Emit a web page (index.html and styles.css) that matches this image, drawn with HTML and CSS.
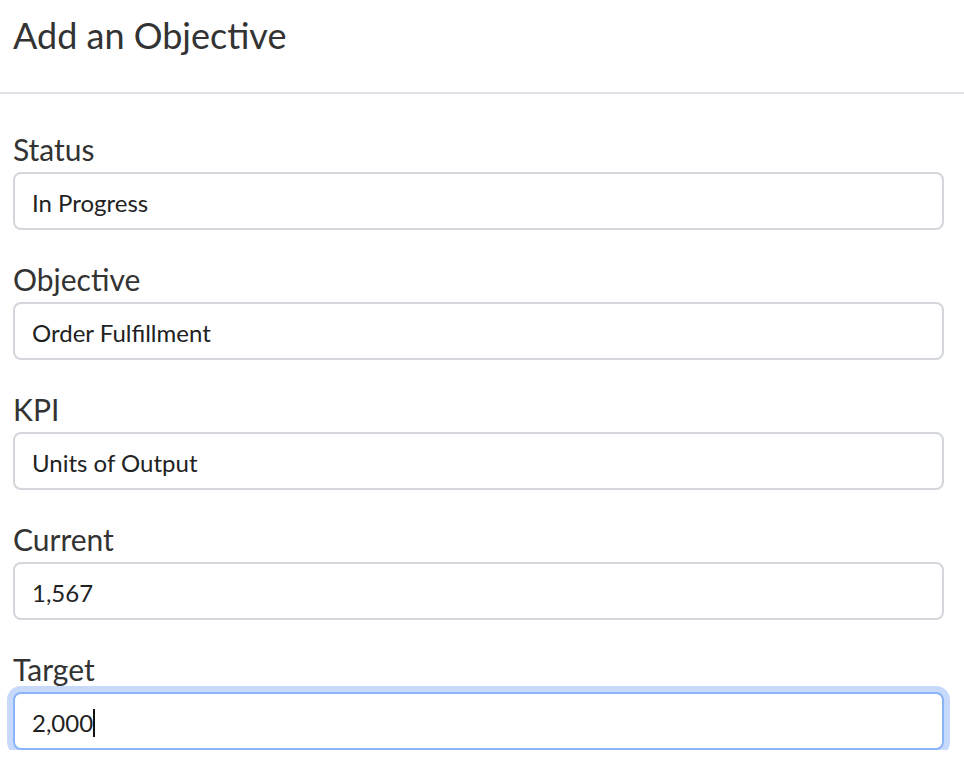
FILE: index.html
```html
<!DOCTYPE html>
<html>
<head>
<meta charset="utf-8">
<link rel="stylesheet" href="styles.css">
</head>
<body>
<div class="header"><h1 class="title">Add an Objective</h1></div>
<form class="form">
  <div class="field">
    <label class="label">Status</label>
    <div class="input">In Progress</div>
  </div>
  <div class="field">
    <label class="label">Objective</label>
    <div class="input">Order Fulfillment</div>
  </div>
  <div class="field">
    <label class="label">KPI</label>
    <div class="input">Units of Output</div>
  </div>
  <div class="field">
    <label class="label">Current</label>
    <div class="input">1,567</div>
  </div>
  <div class="field">
    <label class="label">Target</label>
    <div class="input focused">2,000<span class="caret"></span></div>
  </div>
</form>
</body>
</html>
```
FILE: styles.css
```css
html, body {
  margin: 0;
  padding: 0;
  background: #fff;
  font-family: Lato, "Open Sans", sans-serif;
  color: #333;
}
.header {
  height: 92px;
  border-bottom: 2px solid #dfe2e6;
  box-sizing: content-box;
}
.title {
  margin: 0;
  padding: 14px 0 0 13px;
  font-size: 36px;
  font-weight: 400;
  line-height: 42px;
  color: #333;
}
.form {
  padding: 38px 20px 0 13px;
  display: flex;
  flex-direction: column;
  gap: 32px;
}
.field {
  display: flex;
  flex-direction: column;
  gap: 5px;
}
.label {
  font-size: 30px;
  line-height: 35px;
  color: #333;
}
.input {
  box-sizing: border-box;
  height: 58px;
  border: 2px solid #d3d6da;
  border-radius: 8px;
  padding: 3px 17px 0;
  display: flex;
  align-items: center;
  font-size: 24px;
  color: #222;
  background: #fff;
}
.input.focused {
  border-color: #8ab4f8;
  box-shadow: 0 0 0 6px #c8dafc;
}
.caret {
  display: inline-block;
  width: 2px;
  height: 28px;
  background: #111;
}
```
